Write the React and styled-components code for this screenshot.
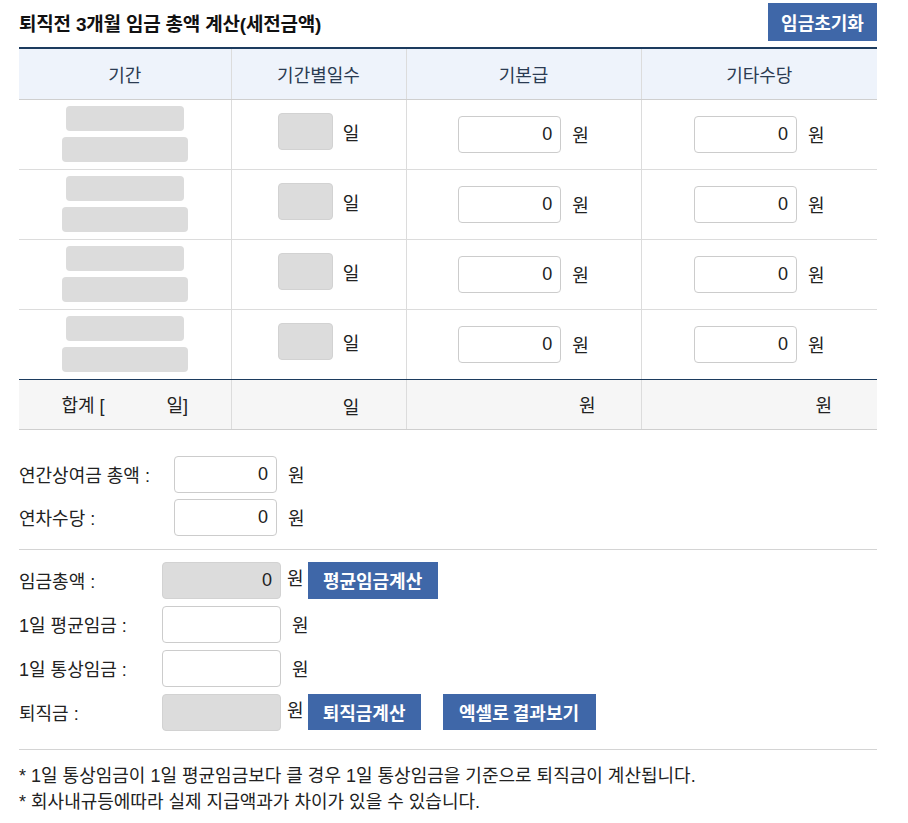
import React from "react";
import styled, { createGlobalStyle } from "styled-components";

const Global = createGlobalStyle`
  * { box-sizing: border-box; }
  body {
    margin: 0;
    background: #fff;
    font-family: "Liberation Sans", "Noto Sans CJK KR", sans-serif;
    color: #222;
    font-size: 18px;
  }
`;

const Page = styled.div`
  width: 858px;
  margin-left: 19px;
`;

const TitleBar = styled.div`
  display: flex;
  justify-content: space-between;
  align-items: center;
  padding-top: 3px;
  margin-bottom: 6px;
`;

const Title = styled.h2`
  margin: 0;
  font-size: 19px;
  font-weight: 700;
  color: #111;
  letter-spacing: -0.2px;
`;

const Button = styled.button`
  display: inline-flex;
  align-items: center;
  justify-content: center;
  width: ${(p) => p.$w}px;
  height: ${(p) => p.$h || 37}px;
  padding: 0;
  border: none;
  background: #3f67a8;
  color: #fff;
  font-family: "Noto Sans CJK KR", sans-serif;
  font-weight: 700;
  font-size: 18px;
  cursor: pointer;
  flex-shrink: 0;
`;

const Table = styled.table`
  width: 858px;
  border-collapse: collapse;
  table-layout: fixed;
  border-top: 2px solid #1c3b5e;
`;

const Th = styled.th`
  height: 51px;
  background: #eef3fb;
  font-weight: 400;
  color: #2b3b52;
  font-size: 18px;
  border-bottom: 1px solid #cfcfcf;
  border-left: 1px solid #dcdcdc;
  &:first-child { border-left: none; }
`;

const Tr = styled.tr`
  & > td { border-bottom: 1px solid ${(p) => (p.$last ? "#1c3b5e" : "#dcdcdc")}; }
`;

const Td = styled.td`
  height: 70px;
  padding: 0;
  text-align: center;
  border-left: 1px solid #dcdcdc;
  &:first-child { border-left: none; }
`;

const TotalTd = styled.td`
  height: 50px;
  padding: 0 ${(p) => (p.$right ? "45px" : "0")} 0 0;
  background: #f6f6f6;
  text-align: ${(p) => (p.$right ? "right" : "center")};
  border-left: 1px solid #dcdcdc;
  border-bottom: 1px solid #cfcfcf;
  &:first-child { border-left: none; }
`;

const PeriodStack = styled.div`
  display: flex;
  flex-direction: column;
  align-items: center;
  gap: 6px;
`;

const GrayBox = styled.div`
  width: ${(p) => p.$w}px;
  height: ${(p) => p.$h}px;
  background: #dcdcdc;
  border-radius: 4px;
  border: ${(p) => (p.$bordered ? "1px solid #d2d2d2" : "none")};
`;

const CellLine = styled.div`
  display: inline-flex;
  align-items: center;
  gap: ${(p) => p.$gap || 10}px;
`;

const Field = styled.div`
  width: ${(p) => p.$w}px;
  height: 37px;
  border: 1px solid ${(p) => (p.$gray ? "#d2d2d2" : "#cccccc")};
  border-radius: 4px;
  background: ${(p) => (p.$gray ? "#dcdcdc" : "#fff")};
  text-align: right;
  padding-right: 8px;
  line-height: 35px;
  font-size: 18px;
  color: #222;
`;

const Blank = styled.span`
  display: inline-block;
  width: ${(p) => p.$w}px;
`;

const Unit = styled.span`
  font-size: 18px;
  color: #222;
  position: relative;
  top: ${(p) => p.$up || 0}px;
`;

const Form = styled.div`
  display: flex;
  flex-direction: column;
  gap: ${(p) => p.$gap}px;
  padding: ${(p) => p.$pad};
  border-bottom: 1px solid #d4d4d4;
`;

const FormRow = styled.div`
  display: grid;
  grid-template-columns: ${(p) => p.$label}px auto;
  align-items: center;
`;

const Label = styled.span`
  font-size: 18px;
  color: #222;
`;

const Controls = styled.div`
  display: flex;
  align-items: center;
`;

const Notes = styled.div`
  padding-top: 13px;
  font-size: 18px;
  line-height: 26px;
  color: #222;
`;

const periods = [0, 1, 2, 3];

export default function App() {
  return (
    <>
      <Global />
      <Page>
        <TitleBar>
          <Title>퇴직전 3개월 임금 총액 계산(세전금액)</Title>
          <Button $w={109} $h={38}>임금초기화</Button>
        </TitleBar>

        <Table>
          <colgroup>
            <col style={{ width: 212 }} />
            <col style={{ width: 175 }} />
            <col style={{ width: 235 }} />
            <col style={{ width: 236 }} />
          </colgroup>
          <thead>
            <tr>
              <Th>기간</Th>
              <Th>기간별일수</Th>
              <Th>기본급</Th>
              <Th>기타수당</Th>
            </tr>
          </thead>
          <tbody>
            {periods.map((i) => (
              <Tr key={i} $last={i === periods.length - 1}>
                <Td>
                  <PeriodStack>
                    <GrayBox $w={118} $h={25} />
                    <GrayBox $w={126} $h={25} />
                  </PeriodStack>
                </Td>
                <Td>
                  <CellLine $gap={10}>
                    <GrayBox $w={55} $h={37} $bordered />
                    <Unit>일</Unit>
                  </CellLine>
                </Td>
                <Td>
                  <CellLine $gap={11}>
                    <Field $w={103}>0</Field>
                    <Unit>원</Unit>
                  </CellLine>
                </Td>
                <Td>
                  <CellLine $gap={11}>
                    <Field $w={103}>0</Field>
                    <Unit>원</Unit>
                  </CellLine>
                </Td>
              </Tr>
            ))}
            <tr>
              <TotalTd>
                합계 [<Blank $w={62} />일]
              </TotalTd>
              <TotalTd>
                <CellLine $gap={10}>
                  <Blank $w={55} />
                  <Unit>일</Unit>
                </CellLine>
              </TotalTd>
              <TotalTd $right>원</TotalTd>
              <TotalTd $right>원</TotalTd>
            </tr>
          </tbody>
        </Table>

        <Form $gap={6} $pad="26px 0 13px">
          <FormRow $label={155}>
            <Label>연간상여금 총액 :</Label>
            <Controls>
              <Field $w={103}>0</Field>
              <Unit style={{ marginLeft: 11 }}>원</Unit>
            </Controls>
          </FormRow>
          <FormRow $label={155}>
            <Label>연차수당 :</Label>
            <Controls>
              <Field $w={103}>0</Field>
              <Unit style={{ marginLeft: 11 }}>원</Unit>
            </Controls>
          </FormRow>
        </Form>

        <Form $gap={7} $pad="12px 0 18px">
          <FormRow $label={143}>
            <Label>임금총액 :</Label>
            <Controls>
              <Field $w={119} $gray>0</Field>
              <Unit $up={-3} style={{ marginLeft: 6, marginRight: 4 }}>원</Unit>
              <Button $w={130}>평균임금계산</Button>
            </Controls>
          </FormRow>
          <FormRow $label={143}>
            <Label>1일 평균임금 :</Label>
            <Controls>
              <Field $w={119} />
              <Unit style={{ marginLeft: 11 }}>원</Unit>
            </Controls>
          </FormRow>
          <FormRow $label={143}>
            <Label>1일 통상임금 :</Label>
            <Controls>
              <Field $w={119} />
              <Unit style={{ marginLeft: 11 }}>원</Unit>
            </Controls>
          </FormRow>
          <FormRow $label={143}>
            <Label>퇴직금 :</Label>
            <Controls>
              <Field $w={119} $gray />
              <Unit $up={-3} style={{ marginLeft: 6, marginRight: 4 }}>원</Unit>
              <Button $w={113} $h={36}>퇴직금계산</Button>
              <Button $w={153} $h={36} style={{ marginLeft: 22 }}>엑셀로 결과보기</Button>
            </Controls>
          </FormRow>
        </Form>

        <Notes>
          <div>* 1일 통상임금이 1일 평균임금보다 클 경우 1일 통상임금을 기준으로 퇴직금이 계산됩니다.</div>
          <div>* 회사내규등에따라 실제 지급액과가 차이가 있을 수 있습니다.</div>
        </Notes>
      </Page>
    </>
  );
}
